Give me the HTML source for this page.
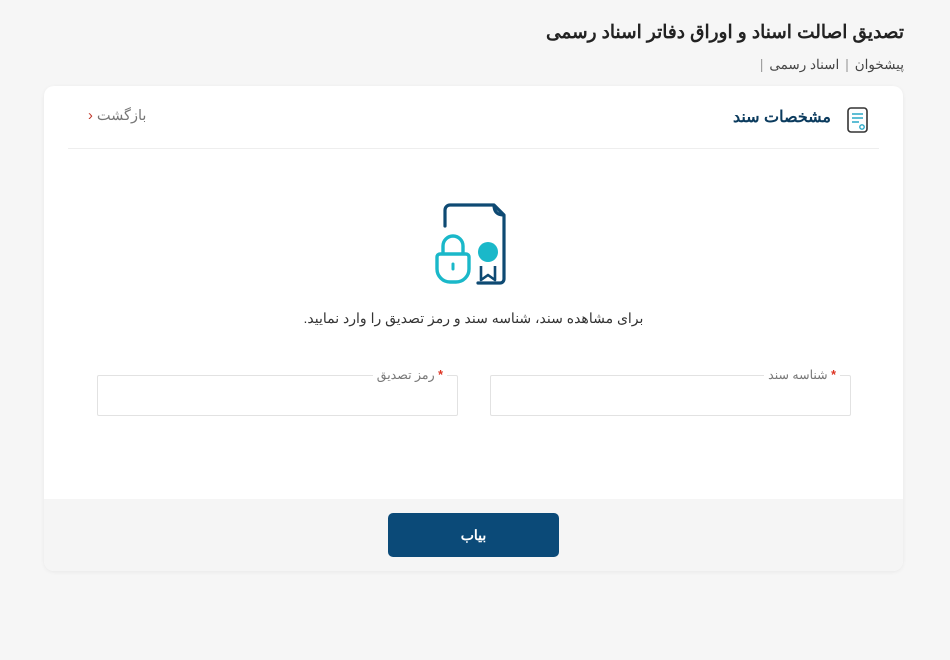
<!DOCTYPE html>
<html dir="rtl"><head><meta charset="utf-8"><style>
*{box-sizing:border-box;margin:0;padding:0}
body{width:950px;height:660px;background:#f6f6f6;font-family:"Liberation Sans","Noto Sans CJK SC",sans-serif;position:relative;overflow:hidden;color:#333}
.abs{position:absolute}
h1{position:absolute;right:46px;top:21px;font-size:18.5px;font-weight:bold;color:#222;white-space:nowrap}
.bc{position:absolute;right:46px;top:57px;font-size:13.5px;color:#444;white-space:nowrap}
.bc span{color:#999;margin:0 6px}
.card{position:absolute;left:44px;top:86px;width:859px;height:485px;background:#fff;border-radius:10px;box-shadow:0 1px 4px rgba(0,0,0,.06);overflow:hidden}
.foot{position:absolute;left:0;right:0;bottom:0;height:72px;background:#f5f5f5}
.btn{position:absolute;left:344px;top:14px;width:171px;height:44px;background:#0b4a78;border-radius:5px;color:#fff;font-weight:bold;font-size:14px;text-align:center;line-height:44px}
.field{position:absolute;top:289px;width:361px;height:41px;border:1px solid #e2e2e2;border-radius:2px}
.lbl{position:absolute;right:10px;top:-9px;background:#fff;padding:0 4px;font-size:12.5px;color:#777;line-height:16px}
.lbl b{color:#d32;font-weight:bold}
</style></head><body>
<h1>تصدیق اصالت اسناد و اوراق دفاتر اسناد رسمی</h1>
<div class="bc">پیشخوان<span>|</span>اسناد رسمی<span>|</span></div>
<div class="card">
 <svg class="abs" style="right:33px;top:20px" width="24" height="28" viewBox="0 0 24 28"><rect x="2" y="2" width="19" height="24" rx="3" fill="none" stroke="#333" stroke-width="1.6"/><path d="M6 8h11M6 12h11M6 16h7" stroke="#2aa9c7" stroke-width="1.5"/><circle cx="16" cy="21" r="2.2" fill="none" stroke="#2aa9c7" stroke-width="1.4"/></svg>
 <div class="abs" style="right:72px;top:21px;font-size:16px;font-weight:bold;color:#0b3b5e">مشخصات سند</div>
 <div class="abs" style="left:44px;top:22px;font-size:14.5px;color:#777">بازگشت <span style="color:#c0392b">&#8249;</span></div>
 <div class="abs" style="left:24px;right:24px;top:62px;height:1px;background:#eee"></div>
 <svg class="abs" style="left:389px;top:116px" width="80" height="84" viewBox="0 0 80 84">
  <path d="M12 24V8a5 5 0 0 1 5-5h44l10 10v64a4 4 0 0 1-4 4H45" fill="none" stroke="#0e4a73" stroke-width="3.2" stroke-linecap="round" stroke-linejoin="round"/>
  <path d="M61 3q0 10 10 10" fill="none" stroke="#0e4a73" stroke-width="3.2"/>
  <path d="M10 51v-7a10 10 0 0 1 20 0v7" fill="none" stroke="#1ab8c9" stroke-width="3.4"/>
  <path d="M4 55a3 3 0 0 1 3-3h26a3 3 0 0 1 3 3v12a13 13 0 0 1-13 13h-6a13 13 0 0 1-13-13z" fill="none" stroke="#1ab8c9" stroke-width="3.4"/>
  <path d="M20 62v5" stroke="#1ab8c9" stroke-width="3" stroke-linecap="round"/>
  <circle cx="55" cy="50" r="10" fill="#1ab8c9"/>
  <path d="M48 64v14l7-5 7 5V64" fill="none" stroke="#0e4a73" stroke-width="2.6" stroke-linejoin="round"/>
 </svg>
 <div class="abs" style="left:0;right:0;top:224px;text-align:center;font-size:14px;color:#333">برای مشاهده سند، شناسه سند و رمز تصدیق را وارد نمایید.</div>
 <div class="field" style="left:446px"><div class="lbl"><b>*</b> شناسه سند</div></div>
 <div class="field" style="left:53px"><div class="lbl"><b>*</b> رمز تصدیق</div></div>
 <div class="foot"><div class="btn">بیاب</div></div>
</div>
</body></html>
